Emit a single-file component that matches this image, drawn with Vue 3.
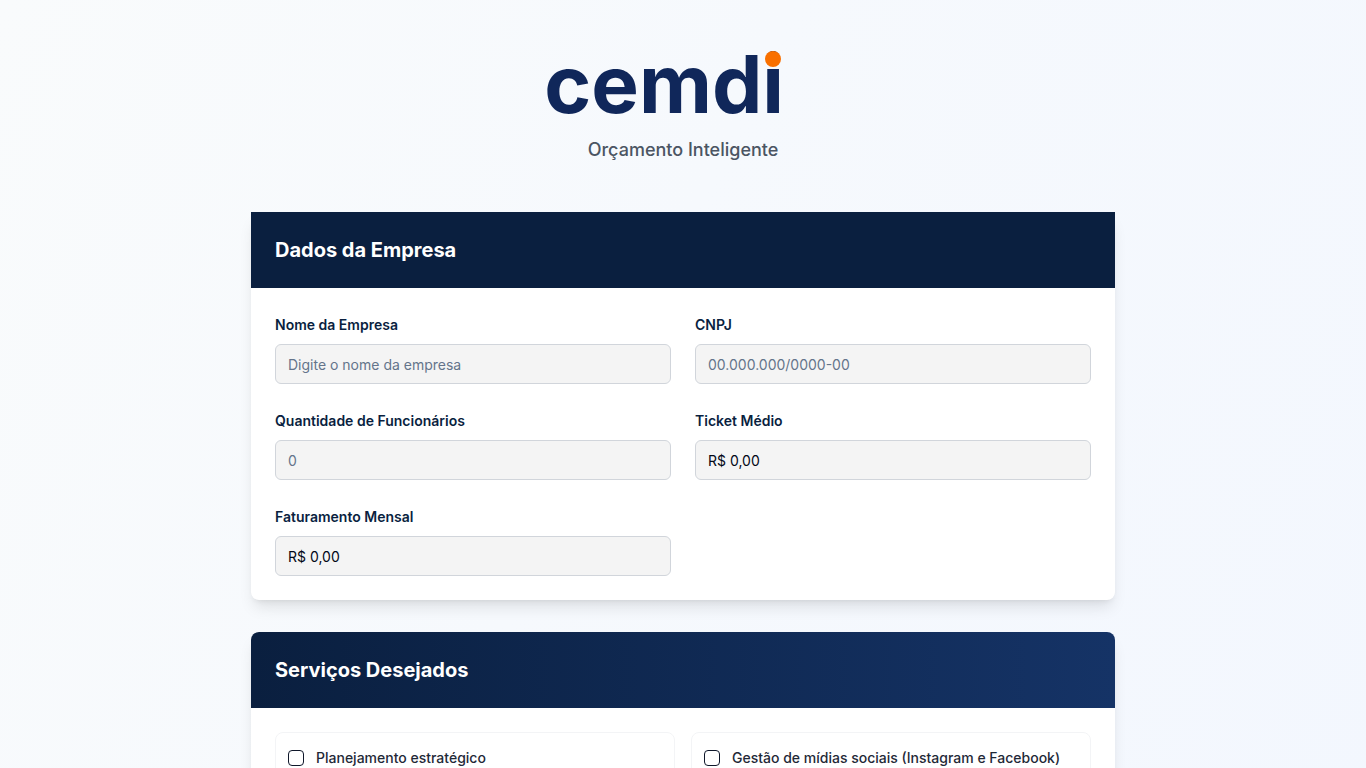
<script setup>
import { reactive, ref } from 'vue'

const fields = reactive([
  { id: 'nome', label: 'Nome da Empresa', placeholder: 'Digite o nome da empresa', value: '' },
  { id: 'cnpj', label: 'CNPJ', placeholder: '00.000.000/0000-00', value: '' },
  { id: 'funcionarios', label: 'Quantidade de Funcionários', placeholder: '0', value: '' },
  { id: 'ticket', label: 'Ticket Médio', placeholder: 'R$ 0,00', value: 'R$ 0,00' },
  { id: 'faturamento', label: 'Faturamento Mensal', placeholder: 'R$ 0,00', value: 'R$ 0,00' },
])

const services = [
  { id: 'planejamento', label: 'Planejamento estratégico' },
  { id: 'midias', label: 'Gestão de mídias sociais (Instagram e Facebook)' },
]
const selected = ref([])
</script>

<template>
  <div class="page">
    <main class="container">
      <header class="brand">
        <svg class="logo" viewBox="0 0 288 104" role="img" aria-label="cemdi">
          <text class="logo-word" x="245" y="81" text-anchor="end">cemdi</text>
          <circle class="logo-dot" cx="234" cy="27" r="8" />
        </svg>
        <p class="tagline">Orçamento Inteligente</p>
      </header>

      <form class="sections" @submit.prevent>
        <section class="card">
          <div class="card-header">
            <h2 class="card-title">Dados da Empresa</h2>
          </div>
          <div class="card-body fields">
            <div v-for="field in fields" :key="field.id" class="field">
              <label class="field-label" :for="field.id">{{ field.label }}</label>
              <input
                :id="field.id"
                v-model="field.value"
                class="field-input"
                type="text"
                :placeholder="field.placeholder"
              />
            </div>
          </div>
        </section>

        <section class="card card-clipped">
          <div class="card-header card-header-gradient">
            <h2 class="card-title">Serviços Desejados</h2>
          </div>
          <div class="card-body services">
            <label v-for="service in services" :key="service.id" class="service" :for="service.id">
              <input
                :id="service.id"
                v-model="selected"
                class="service-check"
                type="checkbox"
                :value="service.id"
              />
              <span>{{ service.label }}</span>
            </label>
          </div>
        </section>
      </form>
    </main>
  </div>
</template>

<style>
html {
  scrollbar-width: none;
}

body {
  margin: 0;
}
</style>

<style scoped>
.page {
  box-sizing: border-box;
  min-height: 100vh;
  padding: 32px 16px;
  background: linear-gradient(115deg, #f9fbfc 0%, #f6f9fd 45%, #f3f7fe 100%);
  color: #020817;
  font-family: Inter, "Liberation Sans", sans-serif;
  font-size: 14px;
  line-height: 20px;
}

.container {
  max-width: 864px;
  margin: 0 auto;
}

.brand {
  display: flex;
  flex-direction: column;
  align-items: center;
  margin-bottom: 48px;
}

.logo {
  width: 288px;
  height: 104px;
}

.logo-word {
  fill: #10275a;
  font-family: Inter, "Liberation Sans", sans-serif;
  font-size: 80px;
  font-weight: 700;
}

.logo-dot {
  fill: #f97000;
}

.tagline {
  margin: 0;
  color: #4b5563;
  font-size: 18px;
  font-weight: 500;
  line-height: 28px;
}

.sections {
  display: flex;
  flex-direction: column;
  gap: 32px;
}

.card {
  border-radius: 8px;
  background: #ffffff;
  box-shadow: 0 10px 15px -3px rgba(0, 0, 0, 0.1), 0 4px 6px -4px rgba(0, 0, 0, 0.1);
}

.card-clipped {
  overflow: hidden;
}

.card-header {
  padding: 24px;
  background: #0a1f3f;
}

.card-header-gradient {
  background: linear-gradient(90deg, #0a1f3f, #153366);
}

.card-title {
  margin: 0;
  color: #ffffff;
  font-size: 20px;
  font-weight: 700;
  line-height: 28px;
}

.card-body {
  display: grid;
  grid-template-columns: repeat(2, minmax(0, 1fr));
  padding: 24px;
}

.fields {
  gap: 24px;
}

.field {
  display: flex;
  flex-direction: column;
  gap: 6px;
}

.field-label {
  padding: 3px 0;
  color: #0a1f3f;
  font-weight: 600;
}

.field-input {
  box-sizing: border-box;
  width: 100%;
  height: 40px;
  padding: 8px 12px;
  border: 1px solid #d1d5db;
  border-radius: 6px;
  background: #f4f4f4;
  color: #020817;
  font: inherit;
}

.field-input::placeholder {
  color: #64748b;
  opacity: 1;
}

.services {
  gap: 16px;
}

.service {
  display: flex;
  align-items: center;
  gap: 12px;
  padding: 15px 12px;
  border: 1px solid #f3f4f6;
  border-radius: 8px;
  color: #1f2937;
  font-weight: 500;
}

.service-check {
  flex: none;
  appearance: none;
  width: 16px;
  height: 16px;
  margin: 0;
  border: 1px solid #0f172a;
  border-radius: 4px;
  background: #ffffff;
}

.service-check:checked {
  background: #0a1f3f;
}
</style>
